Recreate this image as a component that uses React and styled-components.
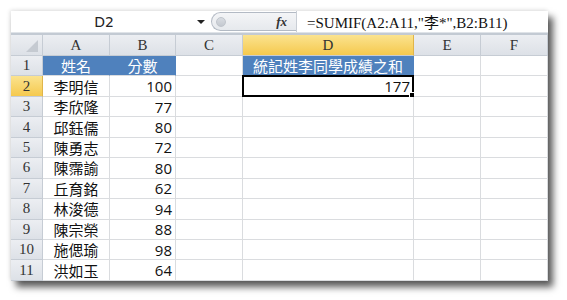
import React from 'react'
import styled, { createGlobalStyle } from 'styled-components'

const Global = createGlobalStyle`
  html, body { margin: 0; padding: 0; background: #fff; }
  body { width: 567px; height: 300px; overflow: hidden; }
`

const Page = styled.div`
  padding: 11px 0 0 11px;
`

const Window = styled.div`
  width: 537px;
  height: 270px;
  background: #fff;
  box-shadow: 5px 6px 7px rgba(0, 0, 0, 0.65), -1px -1px 4px rgba(0, 0, 0, 0.12);
  display: flex;
  flex-direction: column;
  overflow: hidden;
`

const FormulaBar = styled.div`
  height: 21px;
  display: flex;
  align-items: center;
  background: #fff;
`

const NameBox = styled.div`
  width: 186px;
  text-align: center;
  font-family: "DejaVu Sans", "Liberation Sans", sans-serif;
  font-size: 14px;
  color: #222;
  padding-left: 0;
`

const DropArrow = styled.div`
  width: 0;
  height: 0;
  border-left: 4px solid transparent;
  border-right: 4px solid transparent;
  border-top: 4px solid #222;
  margin: 1px 6px 0 0;
`

const Splitter = styled.div`
  width: 85px;
  height: 19px;
  border: 1px solid #b3bac4;
  border-right: none;
  border-radius: 10px 0 0 10px;
  background: linear-gradient(#f4f5f7, #e6e9ed);
  display: flex;
  align-items: center;
  justify-content: space-between;
  padding: 0 9px 0 4px;
  box-sizing: border-box;
`

const Knob = styled.div`
  width: 8px;
  height: 8px;
  border-radius: 50%;
  background: linear-gradient(#d9dde2, #c4c9d0);
  border: 1px solid #c0c5cc;
`

const Fx = styled.span`
  font-family: "Liberation Serif", serif;
  font-style: italic;
  font-weight: bold;
  font-size: 13px;
  color: #333;
`

const FormulaText = styled.div`
  flex: 1;
  height: 21px;
  border-left: 1px solid #c9ced5;
  display: flex;
  align-items: center;
  padding-left: 10px;
  font-family: "Liberation Serif", "Noto Sans CJK TC", serif;
  font-size: 15px;
  color: #111;
`

const Divider = styled.div`
  height: 3px;
  background: #c3cad3;
  border-top: 1px solid #dfe3e8;
  box-sizing: border-box;
`

const Sheet = styled.div`
  display: grid;
  grid-template-columns: 32px 67px 66px 67px 171px 67px 67px;
  grid-template-rows: 21px repeat(11, 20.45px);
`

const Head = styled.div`
  background: ${({ $active }) =>
    $active ? 'linear-gradient(#fbe38f, #f5c94e)' : 'linear-gradient(#eceef2, #dde1e7)'};
  border-right: 1px solid ${({ $active }) => ($active ? '#e0b54a' : '#c6ccd4')};
  border-bottom: 1px solid #c6ccd4;
  box-sizing: border-box;
  display: flex;
  align-items: center;
  justify-content: center;
  font-family: "Liberation Serif", serif;
  font-size: 15px;
  color: #333;
`

const Corner = styled(Head)`
  position: relative;
  &::after {
    content: '';
    position: absolute;
    right: 4px;
    bottom: 3px;
    border-left: 12px solid transparent;
    border-bottom: 12px solid #c5cad1;
  }
`

const RowHead = styled(Head)`
  border-bottom: 1px solid #c6ccd4;
`

const Cell = styled.div`
  position: relative;
  background: ${({ $fill }) => $fill || '#fff'};
  color: ${({ $fill }) => ($fill ? '#fff' : '#111')};
  border-right: 1px solid ${({ $fill }) => ($fill ? '#4f81bd' : '#dadcdf')};
  border-bottom: 1px solid #dadcdf;
  box-sizing: border-box;
  display: flex;
  align-items: center;
  justify-content: ${({ $align }) =>
    $align === 'right' ? 'flex-end' : $align === 'center' ? 'center' : 'flex-start'};
  padding: 0 3px;
  font-family: ${({ $num }) =>
    $num ? '"Open Sans", "Liberation Sans", sans-serif' : '"Noto Sans CJK TC", sans-serif'};
  font-size: 15px;
  white-space: nowrap;
`

const Selection = styled.div`
  position: absolute;
  left: -1px;
  top: -1px;
  right: -1px;
  bottom: -1px;
  border: 2px solid #000;
  pointer-events: none;
  &::after {
    content: '';
    position: absolute;
    right: -4px;
    bottom: -4px;
    width: 5px;
    height: 5px;
    background: #000;
    border: 1px solid #fff;
  }
`

const cols = ['A', 'B', 'C', 'D', 'E', 'F']
const BLUE = '#4f81bd'

const data = [
  ['李明信', 100],
  ['李欣隆', 77],
  ['邱鈺儒', 80],
  ['陳勇志', 72],
  ['陳霈諭', 80],
  ['丘育銘', 62],
  ['林浚德', 94],
  ['陳宗榮', 88],
  ['施偲瑜', 98],
  ['洪如玉', 64],
]

const App = () => {
  const rows = []
  rows.push(
    <React.Fragment key="r1">
      <RowHead>1</RowHead>
      <Cell $fill={BLUE} $align="center">姓名</Cell>
      <Cell $fill={BLUE} $align="center">分數</Cell>
      <Cell />
      <Cell $fill={BLUE} $align="center" style={{ borderBottom: '1px solid #7a5a2a' }}>
        統記姓李同學成績之和
      </Cell>
      <Cell />
      <Cell />
    </React.Fragment>
  )
  data.forEach(([name, score], i) => {
    const n = i + 2
    rows.push(
      <React.Fragment key={n}>
        <RowHead $active={n === 2}>{n}</RowHead>
        <Cell $align="center">{name}</Cell>
        <Cell $align="right" $num>{score}</Cell>
        <Cell />
        <Cell $align="right" $num>
          {n === 2 && '177'}
          {n === 2 && <Selection />}
        </Cell>
        <Cell />
        <Cell />
      </React.Fragment>
    )
  })

  return (
    <Page>
      <Global />
      <Window>
        <FormulaBar>
          <NameBox>D2</NameBox>
          <DropArrow />
          <Splitter>
            <Knob />
            <Fx>fx</Fx>
          </Splitter>
          <FormulaText>=SUMIF(A2:A11,"李*",B2:B11)</FormulaText>
        </FormulaBar>
        <Divider />
        <Sheet>
          <Corner />
          {cols.map((c) => (
            <Head key={c} $active={c === 'D'}>{c}</Head>
          ))}
          {rows}
        </Sheet>
      </Window>
    </Page>
  )
}

export default App
